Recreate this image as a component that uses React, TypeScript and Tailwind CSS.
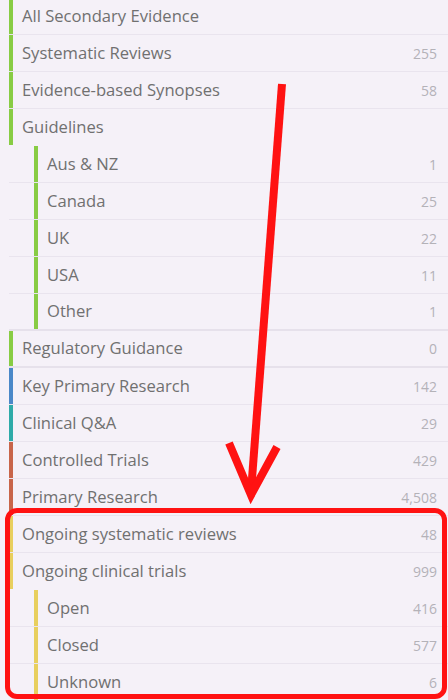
import React from "react";

type Row = {
  label: string;
  count?: string;
  bar: string;
  sub?: boolean;
  noLine?: boolean;
  thick?: boolean;
};

const rows: Row[] = [
  { label: "All Secondary Evidence", bar: "bg-[#88cc44]" },
  { label: "Systematic Reviews", count: "255", bar: "bg-[#88cc44]" },
  { label: "Evidence-based Synopses", count: "58", bar: "bg-[#88cc44]" },
  { label: "Guidelines", bar: "bg-[#88cc44]", noLine: true },
  { label: "Aus & NZ", count: "1", bar: "bg-[#88cc44]", sub: true },
  { label: "Canada", count: "25", bar: "bg-[#88cc44]", sub: true },
  { label: "UK", count: "22", bar: "bg-[#88cc44]", sub: true },
  { label: "USA", count: "11", bar: "bg-[#88cc44]", sub: true },
  { label: "Other", count: "1", bar: "bg-[#88cc44]", sub: true, thick: true },
  { label: "Regulatory Guidance", count: "0", bar: "bg-[#88cc44]", thick: true },
  { label: "Key Primary Research", count: "142", bar: "bg-[#4a88c8]" },
  { label: "Clinical Q&A", count: "29", bar: "bg-[#2eaaa8]" },
  { label: "Controlled Trials", count: "429", bar: "bg-[#c8654a]" },
  { label: "Primary Research", count: "4,508", bar: "bg-[#c8654a]" },
  { label: "Ongoing systematic reviews", count: "48", bar: "bg-[#e8cf5e]" },
  { label: "Ongoing clinical trials", count: "999", bar: "bg-[#e8cf5e]", noLine: true },
  { label: "Open", count: "416", bar: "bg-[#e8cf5e]", sub: true },
  { label: "Closed", count: "577", bar: "bg-[#e8cf5e]", sub: true },
  { label: "Unknown", count: "6", bar: "bg-[#e8cf5e]", sub: true },
];

function ListRow({ row }: { row: Row }) {
  const line = row.noLine
    ? "border-b border-transparent"
    : row.thick
    ? "border-b-2 border-[#e6e1eb]"
    : "border-b border-[#e9e4ee]";
  return (
    <div className={`flex h-[37px] items-stretch ${line}`}>
      <div className={row.sub ? "w-[25px]" : "w-0"} />
      <div className={`w-[4px] shrink-0 ${row.bar}`} />
      <div className="flex flex-1 items-center justify-between pl-[9px] pr-[11px]">
        <span className="text-[16.6px] text-[#707070]">{row.label}</span>
        {row.count && <span className="text-[14px] text-[#b4b2b8]">{row.count}</span>}
      </div>
    </div>
  );
}

export default function App() {
  return (
    <div
      className="relative h-[700px] w-[448px] overflow-hidden bg-[#f5f1f8]"
      style={{ fontFamily: "'Open Sans', 'Liberation Sans', sans-serif" }}
    >
      <div className="-mt-[2px] pl-[9px]">
        {rows.map((r) => (
          <ListRow key={r.label} row={r} />
        ))}
      </div>

      {/* highlight frame */}
      <div className="absolute left-[5px] top-[508px] h-[191px] w-[442px] rounded-[12px] border-[5px] border-[#ff1212]" />

      {/* arrow */}
      <svg className="absolute left-0 top-0" width="448" height="700" viewBox="0 0 448 700">
        <g stroke="#ff1212" strokeWidth="8" fill="none" strokeLinejoin="miter">
          <line x1="282" y1="84" x2="251" y2="492" />
          <polyline points="229,443 251,495 277,447" />
        </g>
      </svg>
    </div>
  );
}
